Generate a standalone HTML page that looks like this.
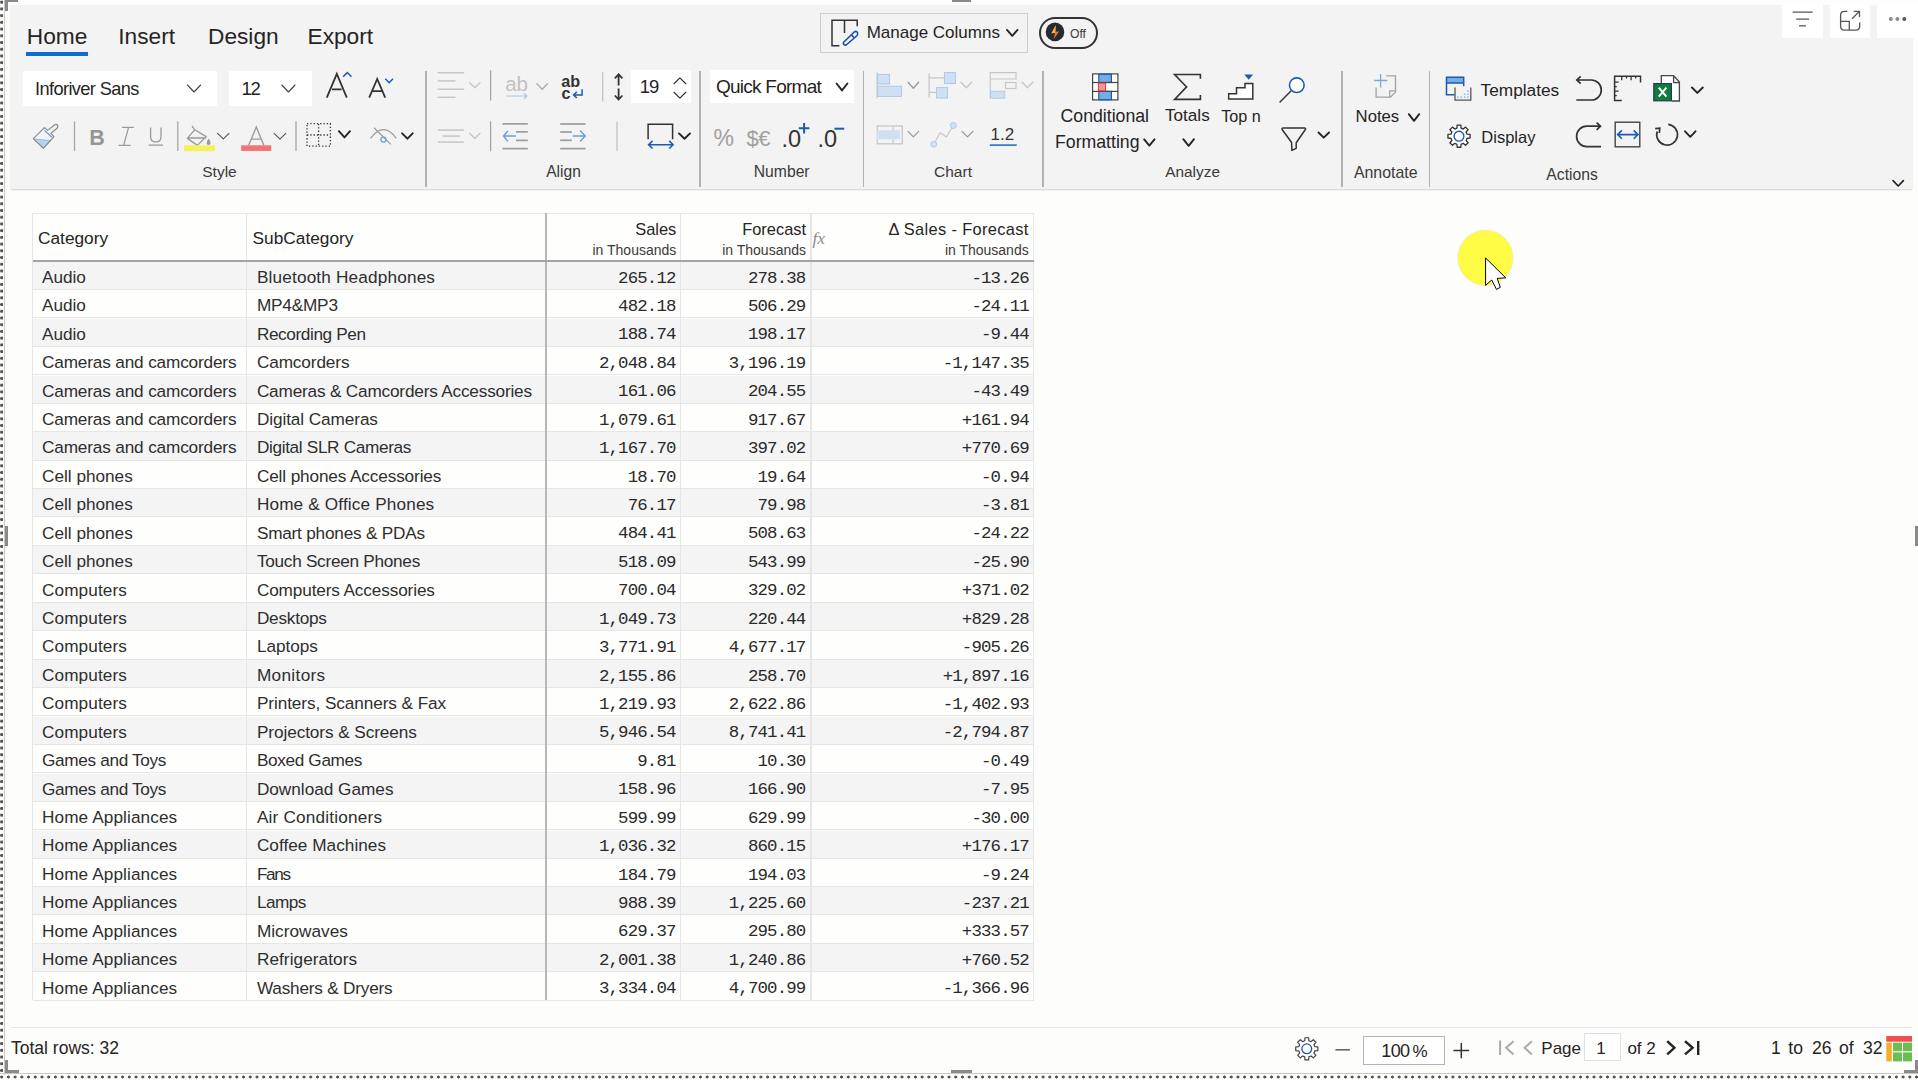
<!DOCTYPE html>
<html><head><meta charset="utf-8"><style>
html,body{margin:0;padding:0;width:1918px;height:1080px;overflow:hidden;background:#fdfdfb;}
body{position:relative;font-family:"Liberation Sans", sans-serif;}
.t{position:absolute;line-height:0;white-space:nowrap;}
.c{transform:translateX(-50%);}
.r{position:absolute;}
svg.r{overflow:visible;}
</style></head><body>
<div class="r" style="left:0.00px;top:0.00px;width:1918.00px;height:1080.00px;background:#fdfdfb;"></div>
<div class="r" style="left:11.00px;top:4.50px;width:1901.00px;height:184.50px;background:#f3f3f3;box-shadow:0 1px 1.5px rgba(0,0,0,0.18);"></div>
<div class="t" style="top:35.88px;font-size:22.7px;color:#252423;left:26.75px;">Home</div>
<div class="r" style="left:25.50px;top:51.75px;width:62.50px;height:4.50px;background:#0f6cd0;"></div>
<div class="t" style="top:35.88px;font-size:22.7px;color:#252423;left:118.25px;">Insert</div>
<div class="t" style="top:35.88px;font-size:22.7px;color:#252423;left:208.00px;">Design</div>
<div class="t" style="top:35.88px;font-size:22.7px;color:#252423;left:307.50px;">Export</div>
<div class="r" style="left:425.05px;top:70.50px;width:1.50px;height:116.50px;background:#b2b2b2;"></div>
<div class="r" style="left:699.45px;top:70.50px;width:1.50px;height:116.50px;background:#b2b2b2;"></div>
<div class="r" style="left:862.75px;top:70.50px;width:1.50px;height:116.50px;background:#b2b2b2;"></div>
<div class="r" style="left:1042.35px;top:70.50px;width:1.50px;height:116.50px;background:#b2b2b2;"></div>
<div class="r" style="left:1341.35px;top:70.50px;width:1.50px;height:116.50px;background:#b2b2b2;"></div>
<div class="r" style="left:1428.75px;top:70.50px;width:1.50px;height:116.50px;background:#b2b2b2;"></div>
<div class="t c" style="top:172.13px;font-size:15.5px;color:#3b3a39;left:219.50px;">Style</div>
<div class="t c" style="top:171.99px;font-size:15.6px;color:#3b3a39;left:563.50px;">Align</div>
<div class="t c" style="top:171.86px;font-size:15.7px;color:#3b3a39;left:781.70px;">Number</div>
<div class="t c" style="top:171.93px;font-size:15.5px;color:#3b3a39;left:953.00px;">Chart</div>
<div class="t c" style="top:171.66px;font-size:15.4px;color:#3b3a39;left:1192.60px;">Analyze</div>
<div class="t c" style="top:172.69px;font-size:15.9px;color:#3b3a39;left:1385.70px;">Annotate</div>
<div class="t c" style="top:175.06px;font-size:15.7px;color:#3b3a39;left:1572.10px;">Actions</div>
<div class="r" style="left:23.10px;top:70.60px;width:193.90px;height:35.60px;background:#ffffff;"></div>
<div class="t" style="top:89.29px;font-size:18.2px;color:#252423;letter-spacing:-0.6px;left:35.00px;">Inforiver Sans</div>
<div class="r" style="left:229.40px;top:70.60px;width:82.50px;height:35.60px;background:#ffffff;"></div>
<div class="t" style="top:89.19px;font-size:18.5px;color:#252423;letter-spacing:-1.2px;left:241.50px;">12</div>
<div class="r" style="left:630.50px;top:70.20px;width:60.20px;height:32.80px;background:#ffffff;"></div>
<div class="t" style="top:87.29px;font-size:18.5px;color:#252423;letter-spacing:-1.2px;left:639.80px;">19</div>
<div class="r" style="left:710.00px;top:70.30px;width:143.50px;height:32.50px;background:#ffffff;"></div>
<div class="t" style="top:87.21px;font-size:19px;color:#252423;letter-spacing:-0.75px;left:716.00px;">Quick Format</div>
<div class="t c" style="top:115.76px;font-size:17.7px;color:#252423;left:1104.80px;">Conditional</div>
<div class="t" style="top:142.36px;font-size:17.7px;color:#252423;left:1055.00px;">Formatting</div>
<div class="t c" style="top:116.07px;font-size:17.1px;color:#252423;left:1187.40px;">Totals</div>
<div class="t c" style="top:116.38px;font-size:16.2px;color:#252423;left:1241.00px;">Top n</div>
<div class="t" style="top:116.71px;font-size:16.7px;color:#252423;left:1355.60px;">Notes</div>
<div class="t" style="top:90.30px;font-size:17.3px;color:#252423;left:1480.50px;">Templates</div>
<div class="t" style="top:136.88px;font-size:16.5px;color:#252423;left:1481.30px;">Display</div>
<div class="r" style="left:819.70px;top:12.50px;width:208.30px;height:40.80px;background:transparent;box-sizing:border-box;border:1.5px solid #cfcfcf;"></div>
<div class="t" style="top:33.31px;font-size:17px;color:#252423;left:866.70px;">Manage Columns</div>
<div class="r" style="left:1039.20px;top:16.70px;width:59.10px;height:32.50px;background:transparent;box-sizing:border-box;border:2px solid #333;border-radius:17px;"></div>
<div class="t" style="top:33.80px;font-size:12.1px;color:#3b3a39;left:1070.00px;">Off</div>
<div class="r" style="left:1782.40px;top:4.60px;width:40.60px;height:33.40px;background:#ffffff;"></div>
<div class="r" style="left:1829.60px;top:4.60px;width:40.80px;height:33.40px;background:#ffffff;"></div>
<div class="r" style="left:1876.90px;top:4.60px;width:41.10px;height:33.40px;background:#ffffff;"></div>
<div class="r" style="left:32.50px;top:213.30px;width:1001.30px;height:47.80px;background:#fefefc;"></div>
<div class="r" style="left:32.50px;top:261.90px;width:1001.30px;height:27.63px;background:#f4f4f5;"></div>
<div class="r" style="left:32.50px;top:289.03px;width:1001.30px;height:1.00px;background:#e6e6e6;"></div>
<div class="t" style="top:276.84px;font-size:17.2px;color:#2e2e2e;letter-spacing:-0.025px;left:42.00px;">Audio</div>
<div class="t" style="top:276.84px;font-size:17.2px;color:#2e2e2e;letter-spacing:0.168px;left:256.90px;">Bluetooth Headphones</div>
<div class="t" style="top:278.57px;font-size:17.4px;color:#2a2a2a;font-family:'Liberation Mono', monospace;letter-spacing:-0.85px;right:1242.40px;">265.12</div>
<div class="t" style="top:278.57px;font-size:17.4px;color:#2a2a2a;font-family:'Liberation Mono', monospace;letter-spacing:-0.85px;right:1112.60px;">278.38</div>
<div class="t" style="top:278.57px;font-size:17.4px;color:#2a2a2a;font-family:'Liberation Mono', monospace;letter-spacing:-0.85px;right:889.10px;">-13.26</div>
<div class="r" style="left:32.50px;top:290.33px;width:1001.30px;height:27.63px;background:#fefefc;"></div>
<div class="r" style="left:32.50px;top:317.46px;width:1001.30px;height:1.00px;background:#e6e6e6;"></div>
<div class="t" style="top:305.27px;font-size:17.2px;color:#2e2e2e;letter-spacing:-0.025px;left:42.00px;">Audio</div>
<div class="t" style="top:305.27px;font-size:17.2px;color:#2e2e2e;letter-spacing:-0.183px;left:256.90px;">MP4&amp;MP3</div>
<div class="t" style="top:307.00px;font-size:17.4px;color:#2a2a2a;font-family:'Liberation Mono', monospace;letter-spacing:-0.85px;right:1242.40px;">482.18</div>
<div class="t" style="top:307.00px;font-size:17.4px;color:#2a2a2a;font-family:'Liberation Mono', monospace;letter-spacing:-0.85px;right:1112.60px;">506.29</div>
<div class="t" style="top:307.00px;font-size:17.4px;color:#2a2a2a;font-family:'Liberation Mono', monospace;letter-spacing:-0.85px;right:889.10px;">-24.11</div>
<div class="r" style="left:32.50px;top:318.76px;width:1001.30px;height:27.63px;background:#f4f4f5;"></div>
<div class="r" style="left:32.50px;top:345.89px;width:1001.30px;height:1.00px;background:#e6e6e6;"></div>
<div class="t" style="top:333.70px;font-size:17.2px;color:#2e2e2e;letter-spacing:-0.025px;left:42.00px;">Audio</div>
<div class="t" style="top:333.70px;font-size:17.2px;color:#2e2e2e;letter-spacing:-0.383px;left:256.90px;">Recording Pen</div>
<div class="t" style="top:335.43px;font-size:17.4px;color:#2a2a2a;font-family:'Liberation Mono', monospace;letter-spacing:-0.85px;right:1242.40px;">188.74</div>
<div class="t" style="top:335.43px;font-size:17.4px;color:#2a2a2a;font-family:'Liberation Mono', monospace;letter-spacing:-0.85px;right:1112.60px;">198.17</div>
<div class="t" style="top:335.43px;font-size:17.4px;color:#2a2a2a;font-family:'Liberation Mono', monospace;letter-spacing:-0.85px;right:889.10px;">-9.44</div>
<div class="r" style="left:32.50px;top:347.19px;width:1001.30px;height:27.63px;background:#fefefc;"></div>
<div class="r" style="left:32.50px;top:374.32px;width:1001.30px;height:1.00px;background:#e6e6e6;"></div>
<div class="t" style="top:362.13px;font-size:17.2px;color:#2e2e2e;letter-spacing:-0.152px;left:42.00px;">Cameras and camcorders</div>
<div class="t" style="top:362.13px;font-size:17.2px;color:#2e2e2e;letter-spacing:-0.111px;left:256.90px;">Camcorders</div>
<div class="t" style="top:363.86px;font-size:17.4px;color:#2a2a2a;font-family:'Liberation Mono', monospace;letter-spacing:-0.85px;right:1242.40px;">2,048.84</div>
<div class="t" style="top:363.86px;font-size:17.4px;color:#2a2a2a;font-family:'Liberation Mono', monospace;letter-spacing:-0.85px;right:1112.60px;">3,196.19</div>
<div class="t" style="top:363.86px;font-size:17.4px;color:#2a2a2a;font-family:'Liberation Mono', monospace;letter-spacing:-0.85px;right:889.10px;">-1,147.35</div>
<div class="r" style="left:32.50px;top:375.62px;width:1001.30px;height:27.63px;background:#f4f4f5;"></div>
<div class="r" style="left:32.50px;top:402.75px;width:1001.30px;height:1.00px;background:#e6e6e6;"></div>
<div class="t" style="top:390.56px;font-size:17.2px;color:#2e2e2e;letter-spacing:-0.152px;left:42.00px;">Cameras and camcorders</div>
<div class="t" style="top:390.56px;font-size:17.2px;color:#2e2e2e;letter-spacing:-0.181px;left:256.90px;">Cameras &amp; Camcorders Accessories</div>
<div class="t" style="top:392.29px;font-size:17.4px;color:#2a2a2a;font-family:'Liberation Mono', monospace;letter-spacing:-0.85px;right:1242.40px;">161.06</div>
<div class="t" style="top:392.29px;font-size:17.4px;color:#2a2a2a;font-family:'Liberation Mono', monospace;letter-spacing:-0.85px;right:1112.60px;">204.55</div>
<div class="t" style="top:392.29px;font-size:17.4px;color:#2a2a2a;font-family:'Liberation Mono', monospace;letter-spacing:-0.85px;right:889.10px;">-43.49</div>
<div class="r" style="left:32.50px;top:404.05px;width:1001.30px;height:27.63px;background:#fefefc;"></div>
<div class="r" style="left:32.50px;top:431.18px;width:1001.30px;height:1.00px;background:#e6e6e6;"></div>
<div class="t" style="top:418.99px;font-size:17.2px;color:#2e2e2e;letter-spacing:-0.152px;left:42.00px;">Cameras and camcorders</div>
<div class="t" style="top:418.99px;font-size:17.2px;color:#2e2e2e;letter-spacing:-0.086px;left:256.90px;">Digital Cameras</div>
<div class="t" style="top:420.72px;font-size:17.4px;color:#2a2a2a;font-family:'Liberation Mono', monospace;letter-spacing:-0.85px;right:1242.40px;">1,079.61</div>
<div class="t" style="top:420.72px;font-size:17.4px;color:#2a2a2a;font-family:'Liberation Mono', monospace;letter-spacing:-0.85px;right:1112.60px;">917.67</div>
<div class="t" style="top:420.72px;font-size:17.4px;color:#2a2a2a;font-family:'Liberation Mono', monospace;letter-spacing:-0.85px;right:889.10px;">+161.94</div>
<div class="r" style="left:32.50px;top:432.48px;width:1001.30px;height:27.63px;background:#f4f4f5;"></div>
<div class="r" style="left:32.50px;top:459.61px;width:1001.30px;height:1.00px;background:#e6e6e6;"></div>
<div class="t" style="top:447.42px;font-size:17.2px;color:#2e2e2e;letter-spacing:-0.152px;left:42.00px;">Cameras and camcorders</div>
<div class="t" style="top:447.42px;font-size:17.2px;color:#2e2e2e;letter-spacing:-0.333px;left:256.90px;">Digital SLR Cameras</div>
<div class="t" style="top:449.15px;font-size:17.4px;color:#2a2a2a;font-family:'Liberation Mono', monospace;letter-spacing:-0.85px;right:1242.40px;">1,167.70</div>
<div class="t" style="top:449.15px;font-size:17.4px;color:#2a2a2a;font-family:'Liberation Mono', monospace;letter-spacing:-0.85px;right:1112.60px;">397.02</div>
<div class="t" style="top:449.15px;font-size:17.4px;color:#2a2a2a;font-family:'Liberation Mono', monospace;letter-spacing:-0.85px;right:889.10px;">+770.69</div>
<div class="r" style="left:32.50px;top:460.91px;width:1001.30px;height:27.63px;background:#fefefc;"></div>
<div class="r" style="left:32.50px;top:488.04px;width:1001.30px;height:1.00px;background:#e6e6e6;"></div>
<div class="t" style="top:475.85px;font-size:17.2px;color:#2e2e2e;letter-spacing:0.0px;left:42.00px;">Cell phones</div>
<div class="t" style="top:475.85px;font-size:17.2px;color:#2e2e2e;letter-spacing:-0.127px;left:256.90px;">Cell phones Accessories</div>
<div class="t" style="top:477.58px;font-size:17.4px;color:#2a2a2a;font-family:'Liberation Mono', monospace;letter-spacing:-0.85px;right:1242.40px;">18.70</div>
<div class="t" style="top:477.58px;font-size:17.4px;color:#2a2a2a;font-family:'Liberation Mono', monospace;letter-spacing:-0.85px;right:1112.60px;">19.64</div>
<div class="t" style="top:477.58px;font-size:17.4px;color:#2a2a2a;font-family:'Liberation Mono', monospace;letter-spacing:-0.85px;right:889.10px;">-0.94</div>
<div class="r" style="left:32.50px;top:489.34px;width:1001.30px;height:27.63px;background:#f4f4f5;"></div>
<div class="r" style="left:32.50px;top:516.47px;width:1001.30px;height:1.00px;background:#e6e6e6;"></div>
<div class="t" style="top:504.28px;font-size:17.2px;color:#2e2e2e;letter-spacing:0.0px;left:42.00px;">Cell phones</div>
<div class="t" style="top:504.28px;font-size:17.2px;color:#2e2e2e;letter-spacing:0.147px;left:256.90px;">Home &amp; Office Phones</div>
<div class="t" style="top:506.01px;font-size:17.4px;color:#2a2a2a;font-family:'Liberation Mono', monospace;letter-spacing:-0.85px;right:1242.40px;">76.17</div>
<div class="t" style="top:506.01px;font-size:17.4px;color:#2a2a2a;font-family:'Liberation Mono', monospace;letter-spacing:-0.85px;right:1112.60px;">79.98</div>
<div class="t" style="top:506.01px;font-size:17.4px;color:#2a2a2a;font-family:'Liberation Mono', monospace;letter-spacing:-0.85px;right:889.10px;">-3.81</div>
<div class="r" style="left:32.50px;top:517.77px;width:1001.30px;height:27.63px;background:#fefefc;"></div>
<div class="r" style="left:32.50px;top:544.90px;width:1001.30px;height:1.00px;background:#e6e6e6;"></div>
<div class="t" style="top:532.71px;font-size:17.2px;color:#2e2e2e;letter-spacing:0.0px;left:42.00px;">Cell phones</div>
<div class="t" style="top:532.71px;font-size:17.2px;color:#2e2e2e;letter-spacing:-0.211px;left:256.90px;">Smart phones &amp; PDAs</div>
<div class="t" style="top:534.44px;font-size:17.4px;color:#2a2a2a;font-family:'Liberation Mono', monospace;letter-spacing:-0.85px;right:1242.40px;">484.41</div>
<div class="t" style="top:534.44px;font-size:17.4px;color:#2a2a2a;font-family:'Liberation Mono', monospace;letter-spacing:-0.85px;right:1112.60px;">508.63</div>
<div class="t" style="top:534.44px;font-size:17.4px;color:#2a2a2a;font-family:'Liberation Mono', monospace;letter-spacing:-0.85px;right:889.10px;">-24.22</div>
<div class="r" style="left:32.50px;top:546.20px;width:1001.30px;height:27.63px;background:#f4f4f5;"></div>
<div class="r" style="left:32.50px;top:573.33px;width:1001.30px;height:1.00px;background:#e6e6e6;"></div>
<div class="t" style="top:561.14px;font-size:17.2px;color:#2e2e2e;letter-spacing:0.0px;left:42.00px;">Cell phones</div>
<div class="t" style="top:561.14px;font-size:17.2px;color:#2e2e2e;letter-spacing:-0.267px;left:256.90px;">Touch Screen Phones</div>
<div class="t" style="top:562.87px;font-size:17.4px;color:#2a2a2a;font-family:'Liberation Mono', monospace;letter-spacing:-0.85px;right:1242.40px;">518.09</div>
<div class="t" style="top:562.87px;font-size:17.4px;color:#2a2a2a;font-family:'Liberation Mono', monospace;letter-spacing:-0.85px;right:1112.60px;">543.99</div>
<div class="t" style="top:562.87px;font-size:17.4px;color:#2a2a2a;font-family:'Liberation Mono', monospace;letter-spacing:-0.85px;right:889.10px;">-25.90</div>
<div class="r" style="left:32.50px;top:574.63px;width:1001.30px;height:27.63px;background:#fefefc;"></div>
<div class="r" style="left:32.50px;top:601.76px;width:1001.30px;height:1.00px;background:#e6e6e6;"></div>
<div class="t" style="top:589.57px;font-size:17.2px;color:#2e2e2e;letter-spacing:0.1px;left:42.00px;">Computers</div>
<div class="t" style="top:589.57px;font-size:17.2px;color:#2e2e2e;letter-spacing:-0.125px;left:256.90px;">Computers Accessories</div>
<div class="t" style="top:591.30px;font-size:17.4px;color:#2a2a2a;font-family:'Liberation Mono', monospace;letter-spacing:-0.85px;right:1242.40px;">700.04</div>
<div class="t" style="top:591.30px;font-size:17.4px;color:#2a2a2a;font-family:'Liberation Mono', monospace;letter-spacing:-0.85px;right:1112.60px;">329.02</div>
<div class="t" style="top:591.30px;font-size:17.4px;color:#2a2a2a;font-family:'Liberation Mono', monospace;letter-spacing:-0.85px;right:889.10px;">+371.02</div>
<div class="r" style="left:32.50px;top:603.06px;width:1001.30px;height:27.63px;background:#f4f4f5;"></div>
<div class="r" style="left:32.50px;top:630.19px;width:1001.30px;height:1.00px;background:#e6e6e6;"></div>
<div class="t" style="top:618.00px;font-size:17.2px;color:#2e2e2e;letter-spacing:0.1px;left:42.00px;">Computers</div>
<div class="t" style="top:618.00px;font-size:17.2px;color:#2e2e2e;letter-spacing:-0.229px;left:256.90px;">Desktops</div>
<div class="t" style="top:619.73px;font-size:17.4px;color:#2a2a2a;font-family:'Liberation Mono', monospace;letter-spacing:-0.85px;right:1242.40px;">1,049.73</div>
<div class="t" style="top:619.73px;font-size:17.4px;color:#2a2a2a;font-family:'Liberation Mono', monospace;letter-spacing:-0.85px;right:1112.60px;">220.44</div>
<div class="t" style="top:619.73px;font-size:17.4px;color:#2a2a2a;font-family:'Liberation Mono', monospace;letter-spacing:-0.85px;right:889.10px;">+829.28</div>
<div class="r" style="left:32.50px;top:631.49px;width:1001.30px;height:27.63px;background:#fefefc;"></div>
<div class="r" style="left:32.50px;top:658.62px;width:1001.30px;height:1.00px;background:#e6e6e6;"></div>
<div class="t" style="top:646.43px;font-size:17.2px;color:#2e2e2e;letter-spacing:0.1px;left:42.00px;">Computers</div>
<div class="t" style="top:646.43px;font-size:17.2px;color:#2e2e2e;letter-spacing:-0.033px;left:256.90px;">Laptops</div>
<div class="t" style="top:648.16px;font-size:17.4px;color:#2a2a2a;font-family:'Liberation Mono', monospace;letter-spacing:-0.85px;right:1242.40px;">3,771.91</div>
<div class="t" style="top:648.16px;font-size:17.4px;color:#2a2a2a;font-family:'Liberation Mono', monospace;letter-spacing:-0.85px;right:1112.60px;">4,677.17</div>
<div class="t" style="top:648.16px;font-size:17.4px;color:#2a2a2a;font-family:'Liberation Mono', monospace;letter-spacing:-0.85px;right:889.10px;">-905.26</div>
<div class="r" style="left:32.50px;top:659.92px;width:1001.30px;height:27.63px;background:#f4f4f5;"></div>
<div class="r" style="left:32.50px;top:687.05px;width:1001.30px;height:1.00px;background:#e6e6e6;"></div>
<div class="t" style="top:674.86px;font-size:17.2px;color:#2e2e2e;letter-spacing:0.1px;left:42.00px;">Computers</div>
<div class="t" style="top:674.86px;font-size:17.2px;color:#2e2e2e;letter-spacing:0.343px;left:256.90px;">Monitors</div>
<div class="t" style="top:676.59px;font-size:17.4px;color:#2a2a2a;font-family:'Liberation Mono', monospace;letter-spacing:-0.85px;right:1242.40px;">2,155.86</div>
<div class="t" style="top:676.59px;font-size:17.4px;color:#2a2a2a;font-family:'Liberation Mono', monospace;letter-spacing:-0.85px;right:1112.60px;">258.70</div>
<div class="t" style="top:676.59px;font-size:17.4px;color:#2a2a2a;font-family:'Liberation Mono', monospace;letter-spacing:-0.85px;right:889.10px;">+1,897.16</div>
<div class="r" style="left:32.50px;top:688.35px;width:1001.30px;height:27.63px;background:#fefefc;"></div>
<div class="r" style="left:32.50px;top:715.48px;width:1001.30px;height:1.00px;background:#e6e6e6;"></div>
<div class="t" style="top:703.29px;font-size:17.2px;color:#2e2e2e;letter-spacing:0.1px;left:42.00px;">Computers</div>
<div class="t" style="top:703.29px;font-size:17.2px;color:#2e2e2e;letter-spacing:-0.078px;left:256.90px;">Printers, Scanners &amp; Fax</div>
<div class="t" style="top:705.02px;font-size:17.4px;color:#2a2a2a;font-family:'Liberation Mono', monospace;letter-spacing:-0.85px;right:1242.40px;">1,219.93</div>
<div class="t" style="top:705.02px;font-size:17.4px;color:#2a2a2a;font-family:'Liberation Mono', monospace;letter-spacing:-0.85px;right:1112.60px;">2,622.86</div>
<div class="t" style="top:705.02px;font-size:17.4px;color:#2a2a2a;font-family:'Liberation Mono', monospace;letter-spacing:-0.85px;right:889.10px;">-1,402.93</div>
<div class="r" style="left:32.50px;top:716.78px;width:1001.30px;height:27.63px;background:#f4f4f5;"></div>
<div class="r" style="left:32.50px;top:743.91px;width:1001.30px;height:1.00px;background:#e6e6e6;"></div>
<div class="t" style="top:731.72px;font-size:17.2px;color:#2e2e2e;letter-spacing:0.1px;left:42.00px;">Computers</div>
<div class="t" style="top:731.72px;font-size:17.2px;color:#2e2e2e;letter-spacing:-0.074px;left:256.90px;">Projectors &amp; Screens</div>
<div class="t" style="top:733.45px;font-size:17.4px;color:#2a2a2a;font-family:'Liberation Mono', monospace;letter-spacing:-0.85px;right:1242.40px;">5,946.54</div>
<div class="t" style="top:733.45px;font-size:17.4px;color:#2a2a2a;font-family:'Liberation Mono', monospace;letter-spacing:-0.85px;right:1112.60px;">8,741.41</div>
<div class="t" style="top:733.45px;font-size:17.4px;color:#2a2a2a;font-family:'Liberation Mono', monospace;letter-spacing:-0.85px;right:889.10px;">-2,794.87</div>
<div class="r" style="left:32.50px;top:745.21px;width:1001.30px;height:27.63px;background:#fefefc;"></div>
<div class="r" style="left:32.50px;top:772.34px;width:1001.30px;height:1.00px;background:#e6e6e6;"></div>
<div class="t" style="top:760.15px;font-size:17.2px;color:#2e2e2e;letter-spacing:-0.331px;left:42.00px;">Games and Toys</div>
<div class="t" style="top:760.15px;font-size:17.2px;color:#2e2e2e;letter-spacing:-0.34px;left:256.90px;">Boxed Games</div>
<div class="t" style="top:761.88px;font-size:17.4px;color:#2a2a2a;font-family:'Liberation Mono', monospace;letter-spacing:-0.85px;right:1242.40px;">9.81</div>
<div class="t" style="top:761.88px;font-size:17.4px;color:#2a2a2a;font-family:'Liberation Mono', monospace;letter-spacing:-0.85px;right:1112.60px;">10.30</div>
<div class="t" style="top:761.88px;font-size:17.4px;color:#2a2a2a;font-family:'Liberation Mono', monospace;letter-spacing:-0.85px;right:889.10px;">-0.49</div>
<div class="r" style="left:32.50px;top:773.64px;width:1001.30px;height:27.63px;background:#f4f4f5;"></div>
<div class="r" style="left:32.50px;top:800.77px;width:1001.30px;height:1.00px;background:#e6e6e6;"></div>
<div class="t" style="top:788.58px;font-size:17.2px;color:#2e2e2e;letter-spacing:-0.331px;left:42.00px;">Games and Toys</div>
<div class="t" style="top:788.58px;font-size:17.2px;color:#2e2e2e;letter-spacing:0.0px;left:256.90px;">Download Games</div>
<div class="t" style="top:790.31px;font-size:17.4px;color:#2a2a2a;font-family:'Liberation Mono', monospace;letter-spacing:-0.85px;right:1242.40px;">158.96</div>
<div class="t" style="top:790.31px;font-size:17.4px;color:#2a2a2a;font-family:'Liberation Mono', monospace;letter-spacing:-0.85px;right:1112.60px;">166.90</div>
<div class="t" style="top:790.31px;font-size:17.4px;color:#2a2a2a;font-family:'Liberation Mono', monospace;letter-spacing:-0.85px;right:889.10px;">-7.95</div>
<div class="r" style="left:32.50px;top:802.07px;width:1001.30px;height:27.63px;background:#fefefc;"></div>
<div class="r" style="left:32.50px;top:829.20px;width:1001.30px;height:1.00px;background:#e6e6e6;"></div>
<div class="t" style="top:817.01px;font-size:17.2px;color:#2e2e2e;letter-spacing:0.1px;left:42.00px;">Home Appliances</div>
<div class="t" style="top:817.01px;font-size:17.2px;color:#2e2e2e;letter-spacing:0.193px;left:256.90px;">Air Conditioners</div>
<div class="t" style="top:818.74px;font-size:17.4px;color:#2a2a2a;font-family:'Liberation Mono', monospace;letter-spacing:-0.85px;right:1242.40px;">599.99</div>
<div class="t" style="top:818.74px;font-size:17.4px;color:#2a2a2a;font-family:'Liberation Mono', monospace;letter-spacing:-0.85px;right:1112.60px;">629.99</div>
<div class="t" style="top:818.74px;font-size:17.4px;color:#2a2a2a;font-family:'Liberation Mono', monospace;letter-spacing:-0.85px;right:889.10px;">-30.00</div>
<div class="r" style="left:32.50px;top:830.50px;width:1001.30px;height:27.63px;background:#f4f4f5;"></div>
<div class="r" style="left:32.50px;top:857.63px;width:1001.30px;height:1.00px;background:#e6e6e6;"></div>
<div class="t" style="top:845.44px;font-size:17.2px;color:#2e2e2e;letter-spacing:0.1px;left:42.00px;">Home Appliances</div>
<div class="t" style="top:845.44px;font-size:17.2px;color:#2e2e2e;letter-spacing:0.036px;left:256.90px;">Coffee Machines</div>
<div class="t" style="top:847.17px;font-size:17.4px;color:#2a2a2a;font-family:'Liberation Mono', monospace;letter-spacing:-0.85px;right:1242.40px;">1,036.32</div>
<div class="t" style="top:847.17px;font-size:17.4px;color:#2a2a2a;font-family:'Liberation Mono', monospace;letter-spacing:-0.85px;right:1112.60px;">860.15</div>
<div class="t" style="top:847.17px;font-size:17.4px;color:#2a2a2a;font-family:'Liberation Mono', monospace;letter-spacing:-0.85px;right:889.10px;">+176.17</div>
<div class="r" style="left:32.50px;top:858.93px;width:1001.30px;height:27.63px;background:#fefefc;"></div>
<div class="r" style="left:32.50px;top:886.06px;width:1001.30px;height:1.00px;background:#e6e6e6;"></div>
<div class="t" style="top:873.87px;font-size:17.2px;color:#2e2e2e;letter-spacing:0.1px;left:42.00px;">Home Appliances</div>
<div class="t" style="top:873.87px;font-size:17.2px;color:#2e2e2e;letter-spacing:-1.3px;left:256.90px;">Fans</div>
<div class="t" style="top:875.60px;font-size:17.4px;color:#2a2a2a;font-family:'Liberation Mono', monospace;letter-spacing:-0.85px;right:1242.40px;">184.79</div>
<div class="t" style="top:875.60px;font-size:17.4px;color:#2a2a2a;font-family:'Liberation Mono', monospace;letter-spacing:-0.85px;right:1112.60px;">194.03</div>
<div class="t" style="top:875.60px;font-size:17.4px;color:#2a2a2a;font-family:'Liberation Mono', monospace;letter-spacing:-0.85px;right:889.10px;">-9.24</div>
<div class="r" style="left:32.50px;top:887.36px;width:1001.30px;height:27.63px;background:#f4f4f5;"></div>
<div class="r" style="left:32.50px;top:914.49px;width:1001.30px;height:1.00px;background:#e6e6e6;"></div>
<div class="t" style="top:902.30px;font-size:17.2px;color:#2e2e2e;letter-spacing:0.1px;left:42.00px;">Home Appliances</div>
<div class="t" style="top:902.30px;font-size:17.2px;color:#2e2e2e;letter-spacing:-0.55px;left:256.90px;">Lamps</div>
<div class="t" style="top:904.03px;font-size:17.4px;color:#2a2a2a;font-family:'Liberation Mono', monospace;letter-spacing:-0.85px;right:1242.40px;">988.39</div>
<div class="t" style="top:904.03px;font-size:17.4px;color:#2a2a2a;font-family:'Liberation Mono', monospace;letter-spacing:-0.85px;right:1112.60px;">1,225.60</div>
<div class="t" style="top:904.03px;font-size:17.4px;color:#2a2a2a;font-family:'Liberation Mono', monospace;letter-spacing:-0.85px;right:889.10px;">-237.21</div>
<div class="r" style="left:32.50px;top:915.79px;width:1001.30px;height:27.63px;background:#fefefc;"></div>
<div class="r" style="left:32.50px;top:942.92px;width:1001.30px;height:1.00px;background:#e6e6e6;"></div>
<div class="t" style="top:930.73px;font-size:17.2px;color:#2e2e2e;letter-spacing:0.1px;left:42.00px;">Home Appliances</div>
<div class="t" style="top:930.73px;font-size:17.2px;color:#2e2e2e;letter-spacing:0.022px;left:256.90px;">Microwaves</div>
<div class="t" style="top:932.46px;font-size:17.4px;color:#2a2a2a;font-family:'Liberation Mono', monospace;letter-spacing:-0.85px;right:1242.40px;">629.37</div>
<div class="t" style="top:932.46px;font-size:17.4px;color:#2a2a2a;font-family:'Liberation Mono', monospace;letter-spacing:-0.85px;right:1112.60px;">295.80</div>
<div class="t" style="top:932.46px;font-size:17.4px;color:#2a2a2a;font-family:'Liberation Mono', monospace;letter-spacing:-0.85px;right:889.10px;">+333.57</div>
<div class="r" style="left:32.50px;top:944.22px;width:1001.30px;height:27.63px;background:#f4f4f5;"></div>
<div class="r" style="left:32.50px;top:971.35px;width:1001.30px;height:1.00px;background:#e6e6e6;"></div>
<div class="t" style="top:959.16px;font-size:17.2px;color:#2e2e2e;letter-spacing:0.1px;left:42.00px;">Home Appliances</div>
<div class="t" style="top:959.16px;font-size:17.2px;color:#2e2e2e;letter-spacing:0.075px;left:256.90px;">Refrigerators</div>
<div class="t" style="top:960.89px;font-size:17.4px;color:#2a2a2a;font-family:'Liberation Mono', monospace;letter-spacing:-0.85px;right:1242.40px;">2,001.38</div>
<div class="t" style="top:960.89px;font-size:17.4px;color:#2a2a2a;font-family:'Liberation Mono', monospace;letter-spacing:-0.85px;right:1112.60px;">1,240.86</div>
<div class="t" style="top:960.89px;font-size:17.4px;color:#2a2a2a;font-family:'Liberation Mono', monospace;letter-spacing:-0.85px;right:889.10px;">+760.52</div>
<div class="r" style="left:32.50px;top:972.65px;width:1001.30px;height:27.63px;background:#fefefc;"></div>
<div class="r" style="left:32.50px;top:999.78px;width:1001.30px;height:1.00px;background:#e6e6e6;"></div>
<div class="t" style="top:987.59px;font-size:17.2px;color:#2e2e2e;letter-spacing:0.1px;left:42.00px;">Home Appliances</div>
<div class="t" style="top:987.59px;font-size:17.2px;color:#2e2e2e;letter-spacing:-0.2px;left:256.90px;">Washers &amp; Dryers</div>
<div class="t" style="top:989.32px;font-size:17.4px;color:#2a2a2a;font-family:'Liberation Mono', monospace;letter-spacing:-0.85px;right:1242.40px;">3,334.04</div>
<div class="t" style="top:989.32px;font-size:17.4px;color:#2a2a2a;font-family:'Liberation Mono', monospace;letter-spacing:-0.85px;right:1112.60px;">4,700.99</div>
<div class="t" style="top:989.32px;font-size:17.4px;color:#2a2a2a;font-family:'Liberation Mono', monospace;letter-spacing:-0.85px;right:889.10px;">-1,366.96</div>
<div class="r" style="left:32.50px;top:212.70px;width:1001.30px;height:1.20px;background:#e6e6e6;"></div>
<div class="r" style="left:31.90px;top:213.30px;width:1.20px;height:786.98px;background:#e6e6e6;"></div>
<div class="r" style="left:1033.20px;top:213.30px;width:1.20px;height:786.98px;background:#e6e6e6;"></div>
<div class="r" style="left:245.65px;top:213.30px;width:1.20px;height:786.98px;background:#e6e6e6;"></div>
<div class="r" style="left:679.90px;top:213.30px;width:1.20px;height:786.98px;background:#e6e6e6;"></div>
<div class="r" style="left:810.40px;top:213.30px;width:1.20px;height:786.98px;background:#e6e6e6;"></div>
<div class="r" style="left:545.40px;top:213.30px;width:1.50px;height:786.98px;background:#b8b8b8;"></div>
<div class="r" style="left:32.50px;top:260.40px;width:1001.30px;height:1.50px;background:#a3a3a3;"></div>
<div class="t" style="top:237.60px;font-size:17.3px;color:#252423;left:38.00px;">Category</div>
<div class="t" style="top:237.60px;font-size:17.3px;color:#252423;left:252.60px;">SubCategory</div>
<div class="t" style="top:228.61px;font-size:16.4px;color:#252423;right:1241.70px;">Sales</div>
<div class="t" style="top:228.61px;font-size:16.4px;color:#252423;right:1112.00px;">Forecast</div>
<div class="t" style="top:228.61px;font-size:16.4px;color:#252423;letter-spacing:0.35px;right:889.30px;">Δ Sales - Forecast</div>
<div class="t" style="top:249.95px;font-size:14px;color:#3b3a39;right:1241.70px;">in Thousands</div>
<div class="t" style="top:249.95px;font-size:14px;color:#3b3a39;right:1112.00px;">in Thousands</div>
<div class="t" style="top:249.95px;font-size:14px;color:#3b3a39;right:889.30px;">in Thousands</div>
<div class="t" style="top:237.59px;font-size:17.5px;color:#8c8c8c;font-family:'Liberation Serif', serif;font-style:italic;left:812.50px;">fx</div>
<div class="r" style="left:11.00px;top:1027.20px;width:1901.00px;height:1.20px;background:#e6e6e6;"></div>
<div class="t" style="top:1047.63px;font-size:17.5px;color:#252423;left:11.00px;">Total rows: 32</div>
<div class="r" style="left:1363.00px;top:1036.00px;width:81.70px;height:29.00px;background:#ffffff;box-sizing:border-box;border:1.3px solid #b4b4b4;"></div>
<div class="t" style="top:1051.46px;font-size:18px;color:#252423;letter-spacing:-0.6px;left:1381.30px;">100</div>
<div class="t" style="top:1051.91px;font-size:17px;color:#252423;left:1412.50px;">%</div>
<div class="t" style="top:1048.61px;font-size:17px;color:#252423;left:1541.30px;">Page</div>
<div class="r" style="left:1584.00px;top:1033.00px;width:37.40px;height:28.40px;background:#ffffff;box-sizing:border-box;border:1px solid #e0e0e0;"></div>
<div class="t c" style="top:1048.61px;font-size:17px;color:#252423;left:1601.00px;">1</div>
<div class="t" style="top:1048.61px;font-size:17px;color:#252423;left:1627.40px;">of 2</div>
<div class="t" style="top:1047.70px;font-size:17.6px;color:#252423;left:1771.00px;">1</div>
<div class="t" style="top:1047.70px;font-size:17.6px;color:#252423;left:1788.30px;">to</div>
<div class="t" style="top:1047.70px;font-size:17.6px;color:#252423;left:1812.00px;">26</div>
<div class="t" style="top:1047.70px;font-size:17.6px;color:#252423;left:1839.00px;">of</div>
<div class="t" style="top:1047.70px;font-size:17.6px;color:#252423;left:1863.00px;">32</div>
<div class="r" style="left:3.80px;top:0.00px;width:1.20px;height:1074.50px;background:#c8c8c8;"></div>
<div class="r" style="left:0.00px;top:1073.30px;width:1918.00px;height:1.20px;background:#c8c8c8;"></div>
<div class="r" style="left:0;top:0;width:3.8px;height:1073px;background:radial-gradient(circle at 1.6px 50%, #555 1.3px, transparent 1.75px) 0 -1.165px/3.8px 6.73px repeat-y;"></div>
<div class="r" style="left:0;top:1074.6px;width:1918px;height:4px;background:radial-gradient(circle at 50% 2px, #555 1.3px, transparent 1.75px) -1.7px 0/6.73px 4px repeat-x;"></div>
<div class="r" style="left:5.00px;top:0.00px;width:3.00px;height:11.00px;background:#8a8a8a;"></div>
<div class="r" style="left:5.00px;top:0.00px;width:13.00px;height:1.60px;background:#8a8a8a;"></div>
<div class="r" style="left:5.00px;top:1060.00px;width:3.00px;height:13.00px;background:#8a8a8a;"></div>
<div class="r" style="left:5.00px;top:1070.00px;width:13.50px;height:3.00px;background:#8a8a8a;"></div>
<div class="r" style="left:1915.00px;top:1059.70px;width:3.00px;height:13.30px;background:#8a8a8a;"></div>
<div class="r" style="left:1904.40px;top:1070.00px;width:13.60px;height:3.00px;background:#8a8a8a;"></div>
<div class="r" style="left:951.70px;top:0.00px;width:19.60px;height:1.70px;background:#8a8a8a;"></div>
<div class="r" style="left:951.00px;top:1069.80px;width:21.00px;height:3.10px;background:#8a8a8a;"></div>
<div class="r" style="left:5.00px;top:526.00px;width:3.00px;height:19.70px;background:#8a8a8a;"></div>
<div class="r" style="left:1914.70px;top:526.30px;width:3.30px;height:19.50px;background:#8a8a8a;"></div>
<svg class="r" style="left:0;top:0" width="1918" height="1080" viewBox="0 0 1918 1080"><path d="M187.5 85 L194.05 92 L200.6 85" fill="none" stroke="#444" stroke-width="1.1" stroke-linecap="round" stroke-linejoin="round"/><path d="M281.9 85 L288.45 92 L295 85" fill="none" stroke="#444" stroke-width="1.1" stroke-linecap="round" stroke-linejoin="round"/><path d="M326.8 97.7 L336.8 73.8 L346.8 97.7 M332 89.4 L341.6 89.4" fill="none" stroke="#333" stroke-width="1.8"/><path d="M343.1 76.8 L347.3 72.6 L351.4 76.8" fill="none" stroke="#1a5cb0" stroke-width="1.5"/><path d="M369.2 97.7 L377.2 79 L385.2 97.7 M372.8 91.1 L381.6 91.1" fill="none" stroke="#333" stroke-width="1.8"/><path d="M385.3 78.8 L389.2 82.7 L393 78.8" fill="none" stroke="#1a5cb0" stroke-width="1.5"/><path d="M34 139 L43.3 148 L51 140.6 Z" fill="#b6d4f2" stroke="#8ab8e6" stroke-width="0.9"/><path d="M33.3 138.6 L44.5 127.6 L47.6 130.4 L54.8 124.8 Q56.6 123.6 57.6 125.4 Q58.4 127 57 128.2 L51 133.3 L53.9 136.6 L43.3 148.3 Z" fill="none" stroke="#8a8a8a" stroke-width="1.2" stroke-linejoin="round"/><line x1="44.5" y1="130.3" x2="51.9" y2="137.2" stroke="#5a8fd0" stroke-width="1.1" stroke-linecap="butt"/><line x1="74.5" y1="121.3" x2="74.5" y2="151" stroke="#a6a6a6" stroke-width="1.3" stroke-linecap="butt"/><line x1="177.8" y1="121.3" x2="177.8" y2="151" stroke="#a6a6a6" stroke-width="1.3" stroke-linecap="butt"/><line x1="296" y1="121.3" x2="296" y2="151" stroke="#a6a6a6" stroke-width="1.3" stroke-linecap="butt"/><text x="89.2" y="145" font-family="Liberation Sans" font-weight="bold" font-size="21.5" fill="#969696">B</text><path d="M122 127.4 L133.8 127.4 M118.5 145.3 L130.5 145.3 M128.6 127.4 L123.6 145.3" fill="none" stroke="#9a9a9a" stroke-width="1.3"/><path d="M150.6 127.5 L150.6 137 Q150.6 141.9 155.8 141.9 Q161 141.9 161 137 L161 127.5 M148.6 145.1 L163 145.1" fill="none" stroke="#9a9a9a" stroke-width="1.3"/><path d="M194.7 129.8 L206.2 136.6 L197.4 145.4 L187.3 138.4 Z M187.5 138 L206 138 M194.7 129.8 L192 125.8" fill="none" stroke="#9a9a9a" stroke-width="1.3" stroke-linejoin="round"/><path d="M208.6 138.6 Q206.4 142 206.6 143.2 Q206.8 145 208.6 145 Q210.4 145 210.6 143.2 Q210.8 142 208.6 138.6 Z" fill="#9a9a9a"/><rect x="184" y="145.3" width="31" height="5.9" fill="#f4f160"/><path d="M217.6 133.3 L223.3 138.8 L229 133.3" fill="none" stroke="#555" stroke-width="1.1" stroke-linecap="round" stroke-linejoin="round"/><path d="M248.7 145.3 L256.3 127 L263.8 145.3 M252 139.1 L260.6 139.1" fill="none" stroke="#9a9a9a" stroke-width="1.4"/><rect x="241.2" y="145.3" width="30" height="5.6" fill="#f07474"/><path d="M274.1 133.3 L279.95000000000005 139.1 L285.8 133.3" fill="none" stroke="#555" stroke-width="1.1" stroke-linecap="round" stroke-linejoin="round"/><rect x="307" y="123.7" width="23.4" height="22.4" fill="none" stroke="#333" stroke-width="1.3" stroke-dasharray="1.3 2"/><path d="M318.6 124 L318.6 146 M307 135 L330.4 135" fill="none" stroke="#333" stroke-width="1.3" stroke-dasharray="1.3 2"/><path d="M338.9 131.2 L344.45 137.4 L350 131.2" fill="none" stroke="#252423" stroke-width="1.9" stroke-linecap="round" stroke-linejoin="round"/><path d="M370.6 138.3 Q383.5 121 396.3 138.3" fill="none" stroke="#9a9a9a" stroke-width="1.2"/><line x1="374" y1="127.7" x2="390.8" y2="144.4" stroke="#9a9a9a" stroke-width="1.2" stroke-linecap="butt"/><circle cx="383.5" cy="139.6" r="2.6" fill="none" stroke="#6c9ad6" stroke-width="1.2"/><path d="M402.1 133.3 L407.4 138.7 L412.7 133.3" fill="none" stroke="#252423" stroke-width="1.9" stroke-linecap="round" stroke-linejoin="round"/><line x1="437.6" y1="72.8" x2="464.2" y2="72.8" stroke="#c6c6c6" stroke-width="1.5" stroke-linecap="butt"/><line x1="437.6" y1="80.9" x2="455.5" y2="80.9" stroke="#c6c6c6" stroke-width="1.5" stroke-linecap="butt"/><line x1="437.6" y1="89.2" x2="464.2" y2="89.2" stroke="#c6c6c6" stroke-width="1.5" stroke-linecap="butt"/><line x1="437.6" y1="97.3" x2="455.5" y2="97.3" stroke="#c6c6c6" stroke-width="1.5" stroke-linecap="butt"/><path d="M469.6 82.7 L474.8 87.7 L480 82.7" fill="none" stroke="#c6c6c6" stroke-width="1.3" stroke-linecap="round" stroke-linejoin="round"/><line x1="490.6" y1="70.3" x2="490.6" y2="100.5" stroke="#a6a6a6" stroke-width="1.3" stroke-linecap="butt"/><line x1="602.7" y1="72.3" x2="602.7" y2="101.5" stroke="#c2c2c2" stroke-width="1.3" stroke-linecap="butt"/><line x1="490.6" y1="121.3" x2="490.6" y2="151.2" stroke="#a6a6a6" stroke-width="1.3" stroke-linecap="butt"/><line x1="617" y1="121.6" x2="617" y2="151" stroke="#c2c2c2" stroke-width="1.3" stroke-linecap="butt"/><text x="505.2" y="90.5" font-family="Liberation Sans" font-size="20.5" fill="#c2c2c2">ab</text><path d="M506 96 L527 96 M524 93.2 L527 96 L524 98.8" fill="none" stroke="#a8c8ec" stroke-width="1.2"/><path d="M536.8 83.8 L542.15 89.2 L547.5 83.8" fill="none" stroke="#aaa" stroke-width="1.3" stroke-linecap="round" stroke-linejoin="round"/><text x="561.3" y="87.2" font-family="Liberation Sans" font-weight="bold" font-size="16.2" fill="#333">ab</text><text x="561.6" y="98.9" font-family="Liberation Sans" font-weight="bold" font-size="16.2" fill="#333">c</text><path d="M582.1 89.2 L582.1 94.9 L573.8 94.9 M576.8 91.9 L573.6 94.9 L576.8 98" fill="none" stroke="#1a5cb0" stroke-width="1.5"/><path d="M618.6 74.5 L618.6 85.4 M618.6 88.6 L618.6 99.3 M614.8 78.3 L618.6 74.3 L622.4 78.3 M614.8 95.5 L618.6 99.5 L622.4 95.5" fill="none" stroke="#333" stroke-width="1.8"/><path d="M674 83.7 L679.9 77.9 L685.8 83.7" fill="none" stroke="#333" stroke-width="1.2" stroke-linecap="round" stroke-linejoin="round"/><path d="M674 92.3 L679.9 98.1 L685.8 92.3" fill="none" stroke="#333" stroke-width="1.2" stroke-linecap="round" stroke-linejoin="round"/><line x1="437.8" y1="130.1" x2="463.9" y2="130.1" stroke="#c6c6c6" stroke-width="1.5" stroke-linecap="butt"/><line x1="442.3" y1="136.1" x2="459.7" y2="136.1" stroke="#c6c6c6" stroke-width="1.5" stroke-linecap="butt"/><line x1="437.8" y1="142.1" x2="463.9" y2="142.1" stroke="#c6c6c6" stroke-width="1.5" stroke-linecap="butt"/><path d="M469.6 133.2 L474.8 138.5 L480 133.2" fill="none" stroke="#c6c6c6" stroke-width="1.3" stroke-linecap="round" stroke-linejoin="round"/><line x1="502.5" y1="123.9" x2="527.8" y2="123.9" stroke="#9c9c9c" stroke-width="1.7" stroke-linecap="butt"/><line x1="516" y1="131.9" x2="527.8" y2="131.9" stroke="#9c9c9c" stroke-width="1.7" stroke-linecap="butt"/><line x1="516" y1="140.4" x2="527.8" y2="140.4" stroke="#9c9c9c" stroke-width="1.7" stroke-linecap="butt"/><line x1="502.5" y1="148.6" x2="527.8" y2="148.6" stroke="#9c9c9c" stroke-width="1.7" stroke-linecap="butt"/><path d="M515.8 136.1 L503.8 136.1 M507.9 130.9 L503.6 136.1 L507.9 141.4" fill="none" stroke="#6e9fd8" stroke-width="1.5"/><line x1="560.2" y1="124" x2="585.6" y2="124" stroke="#9c9c9c" stroke-width="1.7" stroke-linecap="butt"/><line x1="560.2" y1="132" x2="571.9" y2="132" stroke="#9c9c9c" stroke-width="1.7" stroke-linecap="butt"/><line x1="560.2" y1="140.3" x2="571.9" y2="140.3" stroke="#9c9c9c" stroke-width="1.7" stroke-linecap="butt"/><line x1="560.2" y1="148.6" x2="585.6" y2="148.6" stroke="#9c9c9c" stroke-width="1.7" stroke-linecap="butt"/><path d="M572.7 136 L585 136 M580.1 130.6 L585.2 136 L580.1 141.5" fill="none" stroke="#6e9fd8" stroke-width="1.5"/><path d="M648.1 139.2 L648.1 124.2 L672.6 124.2 L672.6 139.2" fill="none" stroke="#333" stroke-width="1.5"/><path d="M649 144.7 L672.6 144.7 M652.5 140.9 L648.6 144.7 L652.5 148.5 M669.2 140.9 L673.1 144.7 L669.2 148.5" fill="none" stroke="#1a5cb0" stroke-width="1.6"/><path d="M679 133.4 L684.5 138.8 L690 133.4" fill="none" stroke="#252423" stroke-width="1.9" stroke-linecap="round" stroke-linejoin="round"/><path d="M836.6 83.5 L842.0 90.4 L847.4 83.5" fill="none" stroke="#252423" stroke-width="1.9" stroke-linecap="round" stroke-linejoin="round"/><text x="713.5" y="146" font-family="Liberation Sans" font-size="23" fill="#a0a0a0">%</text><text x="746.5" y="146" font-family="Liberation Sans" font-size="22" fill="#a0a0a0" letter-spacing="-0.5">$€</text><text x="781.5" y="147" font-family="Liberation Sans" font-size="23.5" fill="#333">.0</text><path d="M804.1 123 L804.1 133.6 M798.8 128.3 L809.4 128.3" fill="none" stroke="#1a5cb0" stroke-width="2"/><text x="817.5" y="147" font-family="Liberation Sans" font-size="23.5" fill="#333">.0</text><line x1="834.4" y1="128.7" x2="844.2" y2="128.7" stroke="#1a5cb0" stroke-width="2" stroke-linecap="butt"/><line x1="877.1" y1="72.3" x2="877.1" y2="98.3" stroke="#c6c6c6" stroke-width="1.2" stroke-linecap="butt"/><rect x="877.6" y="74.4" width="12" height="9.6" fill="#cfe0f3" stroke="#a8c6e8" stroke-width="0.9"/><rect x="877.6" y="86.2" width="24" height="10.2" fill="#cfe0f3" stroke="#a8c6e8" stroke-width="0.9"/><path d="M908.1 82.3 L913.35 88.3 L918.6 82.3" fill="none" stroke="#999" stroke-width="1.3" stroke-linecap="round" stroke-linejoin="round"/><path d="M929.1 73.2 L929.1 97.4 M929.1 77.8 L944.2 77.8 M929.1 92.4 L936.4 92.4" fill="none" stroke="#c6c6c6" stroke-width="1.2"/><rect x="944.4" y="72.6" width="11" height="11" fill="#cfe0f3" stroke="#a8c6e8" stroke-width="0.9"/><rect x="936.6" y="87.6" width="11" height="10.5" fill="#cfe0f3" stroke="#a8c6e8" stroke-width="0.9"/><path d="M961 82.3 L966.3 87.8 L971.6 82.3" fill="none" stroke="#c6c6c6" stroke-width="1.3" stroke-linecap="round" stroke-linejoin="round"/><path d="M990.3 72.6 L1016 72.6 L1016 79 L990.3 79 Z M990.3 72.6 L990.3 98" fill="none" stroke="#c6c6c6" stroke-width="1.2"/><rect x="1005.5" y="82.5" width="10.5" height="6" fill="none" stroke="#c6c6c6" stroke-width="1.2"/><rect x="990.5" y="91.2" width="14.3" height="7" fill="#cfe0f3" stroke="#a8c6e8" stroke-width="0.9"/><path d="M1022.2 82.3 L1027.45 87.8 L1032.7 82.3" fill="none" stroke="#c6c6c6" stroke-width="1.3" stroke-linecap="round" stroke-linejoin="round"/><rect x="877.3" y="126" width="25" height="17.8" fill="none" stroke="#c6c6c6" stroke-width="1.3"/><line x1="893.1" y1="126" x2="893.1" y2="143.8" stroke="#c6c6c6" stroke-width="1.1" stroke-linecap="butt"/><rect x="877" y="130.2" width="23" height="9.2" fill="#cfe0f3"/><path d="M908.1 131.4 L913.35 136.9 L918.6 131.4" fill="none" stroke="#999" stroke-width="1.3" stroke-linecap="round" stroke-linejoin="round"/><path d="M933.7 144.2 L940.1 132.8 L946.5 136.9 L953.3 125.5" fill="none" stroke="#c6c6c6" stroke-width="1.1"/><circle cx="933.7" cy="144.2" r="3" fill="#cfe0f3" stroke="#a8c6e8" stroke-width="0.9"/><circle cx="953.3" cy="125.5" r="3" fill="#cfe0f3" stroke="#a8c6e8" stroke-width="0.9"/><path d="M962 131.4 L967.45 136.9 L972.9 131.4" fill="none" stroke="#999" stroke-width="1.3" stroke-linecap="round" stroke-linejoin="round"/><text x="990.6" y="139.6" font-family="Liberation Sans" font-size="17" fill="#333">1.2</text><line x1="989.8" y1="145.1" x2="1016.7" y2="145.1" stroke="#2b6cc4" stroke-width="1.6" stroke-linecap="butt"/><rect x="1092.6" y="73.9" width="25.3" height="26" fill="#fff" stroke="#444" stroke-width="1.2"/><rect x="1098.8" y="74.3" width="12.6" height="8.2" fill="#74ade6" stroke="#1a5cb0" stroke-width="1.2"/><rect x="1098.8" y="91.4" width="12.6" height="8.3" fill="#74ade6" stroke="#1a5cb0" stroke-width="1.2"/><line x1="1092.6" y1="82.5" x2="1117.9" y2="82.5" stroke="#444" stroke-width="1.2" stroke-linecap="butt"/><line x1="1092.6" y1="91.4" x2="1117.9" y2="91.4" stroke="#444" stroke-width="1.2" stroke-linecap="butt"/><rect x="1098.4" y="83.1" width="7.2" height="7.7" fill="#f49494" stroke="#e03a3a" stroke-width="1"/><path d="M1200.4 78.7 L1200.4 74.5 L1174.6 74.5 L1186.6 86.9 L1174.6 99.4 L1200.4 99.4 L1200.4 95" fill="none" stroke="#333" stroke-width="1.6" stroke-linejoin="miter"/><path d="M1183.3 139.2 L1188.65 145.8 L1194 139.2" fill="none" stroke="#252423" stroke-width="1.9" stroke-linecap="round" stroke-linejoin="round"/><path d="M1228.7 98.9 L1228.7 93.7 L1236.5 93.7 L1236.5 87.8 L1245 87.8 L1245 83.6 L1252.8 83.6 L1252.8 98.9 Z" fill="#fff" stroke="#333" stroke-width="1.5"/><path d="M1244.3 74.5 L1253.1 74.5 L1248.7 79.7 Z" fill="#1a5cb0"/><circle cx="1296.8" cy="85.2" r="7.3" fill="#fff" stroke="#1a5cb0" stroke-width="1.6"/><line x1="1291.2" y1="90.7" x2="1279.6" y2="102.4" stroke="#333" stroke-width="1.4" stroke-linecap="butt"/><path d="M1283 127.9 L1304.6 127.9 Q1306.2 128.2 1305.2 129.8 L1296.2 142.7 L1296.2 148.3 L1291.9 150.4 L1291.6 142.5 L1282.3 129.8 Q1281.4 128.2 1283 127.9 Z" fill="none" stroke="#333" stroke-width="1.5" stroke-linejoin="round"/><path d="M1144.2 139.3 L1149.35 145.6 L1154.5 139.3" fill="none" stroke="#252423" stroke-width="1.9" stroke-linecap="round" stroke-linejoin="round"/><path d="M1318.5 132.5 L1323.75 137.7 L1329 132.5" fill="none" stroke="#252423" stroke-width="1.9" stroke-linecap="round" stroke-linejoin="round"/><path d="M1380.6 74 L1380.6 87.4 M1374.1 80.5 L1387.4 80.5" fill="none" stroke="#7fa7d3" stroke-width="1.3"/><path d="M1386.2 75.9 L1395.5 75.9 L1395.5 91.9 L1390.5 97.2 L1376.1 97.2 L1376.1 87.4 M1389.7 97 L1389.7 90.9 L1395.5 90.9" fill="none" stroke="#a3a3a3" stroke-width="1.3"/><path d="M1408.8 114.2 L1414.0 120.8 L1419.2 114.2" fill="none" stroke="#252423" stroke-width="1.9" stroke-linecap="round" stroke-linejoin="round"/><rect x="1446.5" y="77.2" width="17.2" height="5.8" fill="#75aee6"/><path d="M1454.4 94.7 L1446.5 94.7 L1446.5 77.2 L1463.7 77.2 L1463.7 86.3 M1446.5 83 L1463.7 83" fill="none" stroke="#1a5cb0" stroke-width="1.5"/><path d="M1455 87.4 L1455 100.2 L1470.8 100.2 L1470.8 87.4" fill="none" stroke="#555" stroke-width="1.3"/><rect x="1467.1000000000001" y="90.2" width="1.6" height="1.6" fill="#8fbbea"/><rect x="1463.8" y="93.5" width="1.6" height="1.6" fill="#8fbbea"/><rect x="1467.1000000000001" y="93.5" width="1.6" height="1.6" fill="#8fbbea"/><rect x="1460.4" y="96.4" width="1.6" height="1.6" fill="#8fbbea"/><rect x="1463.8" y="96.4" width="1.6" height="1.6" fill="#8fbbea"/><rect x="1467.1000000000001" y="96.4" width="1.6" height="1.6" fill="#8fbbea"/><rect x="1457.0" y="96.4" width="1.6" height="1.6" fill="#8fbbea"/><path d="M1577 80 L1591.3 80 A10 10 0 0 1 1591.3 100 L1576.3 100 M1580.7 76.4 L1576.8 80 L1580.7 83.6" fill="none" stroke="#333" stroke-width="1.7"/><path d="M1640.5 82.6 L1640.5 76.3 L1614.6 76.3 L1614.6 100.4 L1621.8 100.4" fill="none" stroke="#333" stroke-width="1.5"/><path d="M1621.7 76.3 L1621.7 80.2 M1626.5 76.3 L1626.5 78.6 M1631.1 76.3 L1631.1 80.2 M1635.7 76.3 L1635.7 78.6 M1614.6 82.1 L1618.6 82.1 M1614.6 86.7 L1616.8 86.7 M1614.6 91.1 L1618.6 91.1 M1614.6 95.6 L1616.8 95.6" fill="none" stroke="#333" stroke-width="1.3"/><path d="M1661.3 83 L1661.3 75.6 L1673.6 75.6 L1679.4 82 L1679.4 101 L1671.8 101 M1673.6 75.6 L1673.6 82.6 L1679.4 82.6" fill="#fff" stroke="#444" stroke-width="1.3"/><rect x="1653.8" y="83.6" width="17.6" height="17.2" fill="#107c41" stroke="#2a3a4a" stroke-width="1.2"/><path d="M1658.8 87.6 L1666.4 96.6 M1666.4 87.6 L1658.8 96.6" stroke="#fff" stroke-width="2"/><path d="M1691.9 87.5 L1697.35 92.9 L1702.8 87.5" fill="none" stroke="#252423" stroke-width="1.9" stroke-linecap="round" stroke-linejoin="round"/><path d="M1456.97 128.15 L1457.16 125.15 L1460.84 125.15 L1461.03 128.15 L1463.25 129.07 L1465.51 127.09 L1468.11 129.69 L1466.13 131.95 L1467.05 134.17 L1470.05 134.36 L1470.05 138.04 L1467.05 138.23 L1466.13 140.45 L1468.11 142.71 L1465.51 145.31 L1463.25 143.33 L1461.03 144.25 L1460.84 147.25 L1457.16 147.25 L1456.97 144.25 L1454.75 143.33 L1452.49 145.31 L1449.89 142.71 L1451.87 140.45 L1450.95 138.23 L1447.95 138.04 L1447.95 134.36 L1450.95 134.17 L1451.87 131.95 L1449.89 129.69 L1452.49 127.09 L1454.75 129.07 Z" fill="#fff" stroke="#333" stroke-width="1.3" stroke-linejoin="round"/><circle cx="1459" cy="136.2" r="4.9" fill="none" stroke="#1a5cb0" stroke-width="1.4"/><path d="M1600.3 126.2 L1586.8 126.2 A10.2 10.2 0 0 0 1586.8 146.6 L1601 146.6 M1596.6 122.6 L1600.5 126.2 L1596.6 129.8" fill="none" stroke="#333" stroke-width="1.7"/><rect x="1615.2" y="122.2" width="24.6" height="24.6" fill="none" stroke="#444" stroke-width="1.4"/><path d="M1618 134.6 L1637.6 134.6 M1621.9 130.4 L1617.6 134.6 L1621.9 138.8 M1633.7 130.4 L1638 134.6 L1633.7 138.8" fill="none" stroke="#1a5cb0" stroke-width="1.6"/><path d="M1668.3 124.3 A10.4 10.4 0 1 1 1657.2 131.5" fill="none" stroke="#333" stroke-width="1.7"/><path d="M1655.2 128.6 L1659.8 128.2 L1659.3 133" fill="none" stroke="#333" stroke-width="1.7"/><path d="M1685 131.3 L1690.25 136.8 L1695.5 131.3" fill="none" stroke="#252423" stroke-width="1.9" stroke-linecap="round" stroke-linejoin="round"/><path d="M1893 180.6 L1898.2 186 L1903.4 180.6" fill="none" stroke="#252423" stroke-width="1.7" stroke-linecap="round" stroke-linejoin="round"/><path d="M1792.6 12.2 L1812.7 12.2 M1796.2 19.1 L1809.1 19.1 M1799 25.9 L1805.9 25.9" fill="none" stroke="#555" stroke-width="1.3"/><path d="M1847.4 11.3 L1844.4 11.3 Q1840.6 11.3 1840.6 15.1 L1840.6 26.3 Q1840.6 30.1 1844.4 30.1 L1855.9 30.1 Q1859.7 30.1 1859.7 26.3 L1859.7 22.6 M1840.6 21.3 L1849.3 21.3 L1849.3 30.1 M1852 18.8 L1859.4 11.4 M1853.7 11.3 L1859.5 11.3 L1859.5 17" fill="none" stroke="#555" stroke-width="1.3"/><circle cx="1890.8" cy="19.1" r="2" fill="#8a8a8a"/><circle cx="1897.4" cy="19.1" r="2" fill="#8a8a8a"/><circle cx="1904.3" cy="19.1" r="2" fill="#555"/><path d="M857.2 26.3 L857.2 20.2 L832 20.2 L832 45.7 L839.4 45.7 M844.5 20.2 L844.5 33" fill="none" stroke="#333" stroke-width="1.5"/><path d="M846.2 45 Q843.3 45.6 843.4 42.5 L854.2 32 Q856.9 30.3 857.6 33 Q858 34.6 856.6 36 L846.2 45 Z M851.8 35.2 L854.6 38.2" fill="none" stroke="#1550b0" stroke-width="1.6" stroke-linejoin="round"/><path d="M1007 29.9 L1012.25 35.8 L1017.5 29.9" fill="none" stroke="#252423" stroke-width="1.9" stroke-linecap="round" stroke-linejoin="round"/><circle cx="1055" cy="31.9" r="9.3" fill="#252a33"/><path d="M1055.8 25.2 L1051.4 33.2 L1055 33 L1053.6 39.2 L1059 31.6 L1055.6 31.8 Z" fill="#f0733a"/><path d="M1055.8 25.2 L1051.4 33.2 L1055 33 Z" fill="#f8b23a"/><circle cx="1485.4" cy="257.8" r="27.6" fill="#fdfb44" stroke="#f4f0b0" stroke-width="1"/><path d="M1485.6 258 L1485.6 285.4 L1491.7 280 L1496.5 289.4 L1500.3 287.3 L1497.2 278.3 L1505.8 277.9 Z" fill="#fff" stroke="#000" stroke-width="1" stroke-linejoin="miter"/><path d="M1304.77 1040.75 L1304.96 1037.75 L1308.64 1037.75 L1308.83 1040.75 L1311.05 1041.67 L1313.31 1039.69 L1315.91 1042.29 L1313.93 1044.55 L1314.85 1046.77 L1317.85 1046.96 L1317.85 1050.64 L1314.85 1050.83 L1313.93 1053.05 L1315.91 1055.31 L1313.31 1057.91 L1311.05 1055.93 L1308.83 1056.85 L1308.64 1059.85 L1304.96 1059.85 L1304.77 1056.85 L1302.55 1055.93 L1300.29 1057.91 L1297.69 1055.31 L1299.67 1053.05 L1298.75 1050.83 L1295.75 1050.64 L1295.75 1046.96 L1298.75 1046.77 L1299.67 1044.55 L1297.69 1042.29 L1300.29 1039.69 L1302.55 1041.67 Z" fill="#fff" stroke="#444" stroke-width="1.2" stroke-linejoin="round"/><circle cx="1306.8" cy="1048.8" r="4.9" fill="none" stroke="#1a5cb0" stroke-width="1.3"/><line x1="1335.5" y1="1049.8" x2="1349.9" y2="1049.8" stroke="#666" stroke-width="1.6" stroke-linecap="butt"/><path d="M1453.4 1050.5 L1469.2 1050.5 M1461.3 1042.9 L1461.3 1058.2" fill="none" stroke="#333" stroke-width="1.5"/><path d="M1500.1 1040.6 L1500.1 1055 M1513.5 1041.2 L1506.2 1047.8 L1513.5 1054.4 M1531.9 1041.2 L1524.6 1047.8 L1531.9 1054.4" fill="none" stroke="#aaa" stroke-width="2"/><path d="M1667.2 1041.2 L1674.4 1047.8 L1667.2 1054.4 M1685 1041.2 L1692.6 1047.8 L1685 1054.4 M1698.2 1041 L1698.2 1055" fill="none" stroke="#252423" stroke-width="2.4"/><rect x="1886.3" y="1036" width="25.7" height="5.7" fill="#ef4f4f"/><rect x="1886.3" y="1042.6" width="5.5" height="18.8" fill="#f5ad2a"/><rect x="1893" y="1042.6" width="9" height="8.6" fill="#6cbd55"/><rect x="1903" y="1042.6" width="9" height="8.6" fill="#6cbd55"/><rect x="1893" y="1052.4" width="9" height="9" fill="#6cbd55"/><rect x="1903" y="1052.4" width="9" height="9" fill="#6cbd55"/></svg>
</body></html>
